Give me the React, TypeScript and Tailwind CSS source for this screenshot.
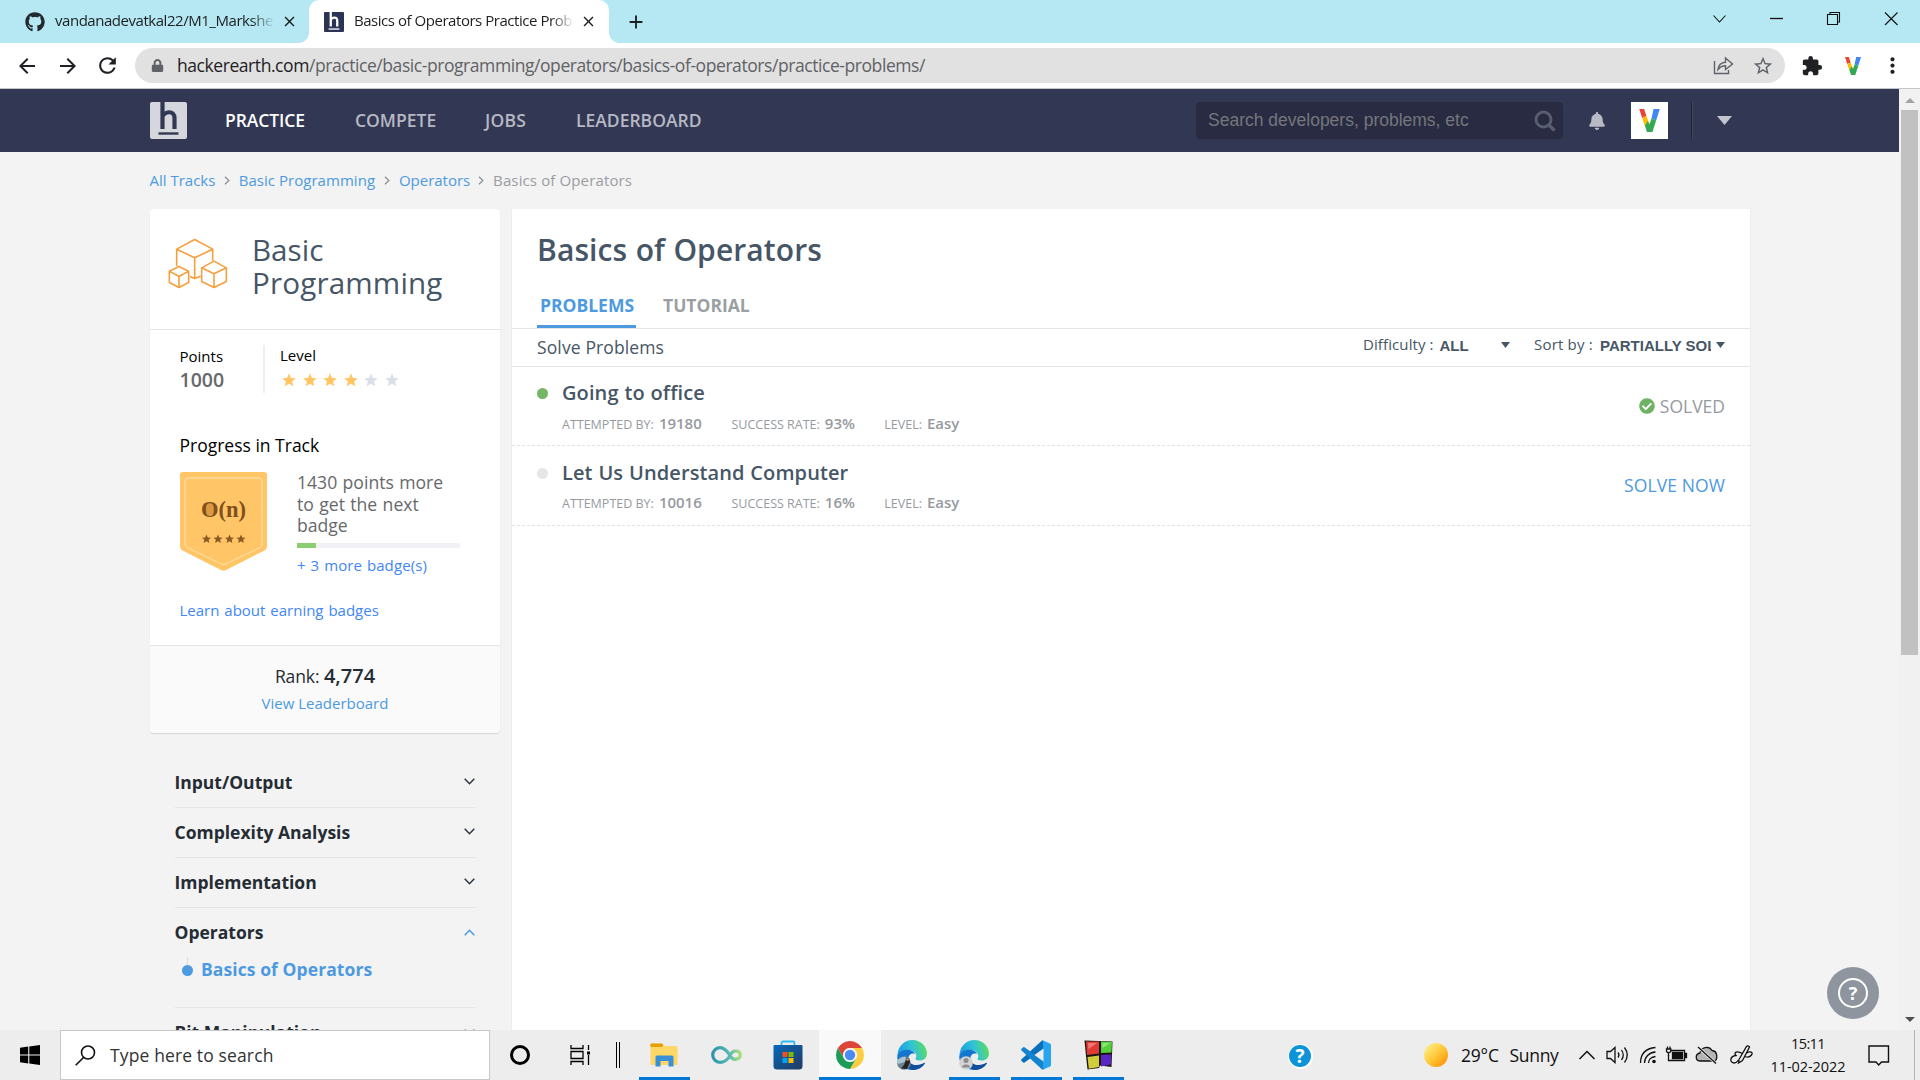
import React from "react";
import { FaGithub, FaBell, FaCheckCircle, FaLock } from "react-icons/fa";
import { MdArrowBack, MdArrowForward, MdRefresh, MdExtension, MdStarBorder, MdMoreVert, MdClose, MdAdd } from "react-icons/md";

/* ---------- small drawings ---------- */

function HLogo({ size, bg, fg }: { size: number; bg: string; fg: string }) {
  return (
    <svg width={size} height={size} viewBox="0 0 37 37" className="shrink-0">
      <rect width="37" height="37" rx="2" fill={bg} />
      <path d="M12.5 0V27M12.5 15C14 9.5 24.5 7.5 24.5 16V27" fill="none" stroke={fg} strokeWidth="4.2" />
      <path d="M8.5 31.5H28.5" stroke={fg} strokeWidth="2.4" />
    </svg>
  );
}

function VLogo({ w, h }: { w: number; h: number }) {
  return (
    <svg width={w} height={h} viewBox="0 0 16 18" className="shrink-0">
      <path d="M0 0H3.8L5.6 5.5L2.3 7Z" fill="#ea4335" />
      <path d="M2.3 7L5.6 5.5L8 12L4.6 14Z" fill="#fbbc05" />
      <path d="M11.2 0H16L13.2 9L9.6 7.2Z" fill="#4285f4" />
      <path d="M9.6 7.2L13.2 9L10.3 18H6L4.4 13L6.6 9.6L8 12Z" fill="#34a853" />
    </svg>
  );
}

function Cubes() {
  return (
    <svg width="60" height="51" viewBox="84 114 180 152" fill="none" stroke="#f79f3d" strokeWidth="4.800" strokeLinejoin="round">
      <path d="M110 198V147L164 118L218 147V182M110 147L164 173L218 147M164 173V233M150 229L164 235L182 228" />
      <path d="M117 199L146 213V247L117 262L88 247V213ZM88 213L117 229L146 213M117 229V262" />
      <path d="M222 183L259 203V244L222 262L185 244V203ZM185 203L222 221L259 203M222 221V262" />
    </svg>
  );
}

const STAR = "M0 -4.6L1.3 -1.5L4.6 -1.3L2.1 0.8L2.9 4.1L0 2.3L-2.9 4.1L-2.1 0.8L-4.6 -1.3L-1.3 -1.5Z";

function Badge() {
  return (
    <svg width="87" height="99" viewBox="0 0 87 99" className="shrink-0">
      <path d="M3 0H84Q87 0 87 3V74Q87 77 84.500 78.500L46 98Q43.500 99.500 41 98L2.500 78.500Q0 77 0 74V3Q0 0 3 0Z" fill="#ffc567" />
      <path d="M9 6H78Q82 6 82 10V72Q82 74.500 80 75.500L45.500 92Q43.500 93 41.500 92L7 75.500Q5 74.500 5 72V10Q5 6 9 6Z" fill="none" stroke="#ffdc9c" strokeWidth="1.300" />
      <ellipse cx="29.500" cy="37" rx="5" ry="6.500" fill="#dc9741" />
      <text x="21" y="44.500" fontFamily="Liberation Serif, serif" fontWeight="700" fontSize="22.500" fill="#7f4f1c" textLength="45" lengthAdjust="spacingAndGlyphs">O(n)</text>
      {[26.5, 38, 49.5, 61].map((x) => (
        <path key={x} d={STAR} transform={`translate(${x} 67)`} fill="#8a5a22" />
      ))}
    </svg>
  );
}

function Chevron({ up = false }: { up?: boolean }) {
  return (
    <svg width="11" height="7" viewBox="0 0 11 7" fill="none" stroke={up ? "#4d9ae0" : "#2c3540"} strokeWidth="1.5">
      <path d={up ? "M0.700 6.200L5.500 1.300L10.300 6.200" : "M0.700 0.800L5.500 5.700L10.300 0.800"} />
    </svg>
  );
}

function Caret({ w, h, color }: { w: number; h: number; color: string }) {
  return (
    <svg width={w} height={h} viewBox="0 0 10 6" preserveAspectRatio="none" className="shrink-0">
      <path d="M0 0H10L5 6Z" fill={color} />
    </svg>
  );
}

/* ---------- browser chrome ---------- */

function TabStrip() {
  return (
    <div className="flex h-[43px] shrink-0 bg-[#b5e8f3] text-[#1c1e20]">
      <div className="flex w-[309px] items-center pl-[25px]">
        <FaGithub size={20} color="#24292f" />
        <div className="mb-[2px] ml-[10px] w-[218px] overflow-hidden whitespace-nowrap bg-gradient-to-r from-[#1c1e20] from-90% to-[#1c1e2010] bg-clip-text text-[15px] tracking-[-0.46px] text-transparent">
          vandanadevatkal22/M1_Markshe
        </div>
        <MdClose size={17} className="ml-[8px]" />
      </div>
      <div className="relative flex w-[300px] items-center rounded-t-[10px] bg-white pl-[15px]">
        <div className="absolute bottom-0 left-[-10px] size-[10px] bg-[radial-gradient(circle_at_0_0,transparent_9.500px,white_10px)]" />
        <div className="absolute right-[-10px] bottom-0 size-[10px] bg-[radial-gradient(circle_at_100%_0,transparent_9.500px,white_10px)]" />
        <HLogo size={20} bg="#2b3454" fg="#ffffff" />
        <div className="mb-[2px] ml-[10px] w-[219px] overflow-hidden whitespace-nowrap bg-gradient-to-r from-[#1c1e20] from-90% to-[#1c1e2010] bg-clip-text text-[15px] tracking-[-0.46px] text-transparent">
          Basics of Operators Practice Prob
        </div>
        <MdClose size={17} className="ml-[7px]" />
      </div>
      <div className="flex w-[54px] items-center justify-center">
        <MdAdd size={22} />
      </div>
      <svg width="190" height="20" viewBox="0 0 190 20" className="mt-[9px] mr-[20px] ml-auto" fill="none" stroke="#111" strokeWidth="1.1">
        <path d="M3.500 6.500L9.500 13L15.500 6.500" />
        <path d="M60 9.500H73" strokeWidth="1.300" />
        <path d="M117.500 5.500H127.500V15.500H117.500ZM120 5.500V3.500H129.500V13H127.500" />
        <path d="M175 3.500L187.500 16M187.500 3.500L175 16" />
      </svg>
    </div>
  );
}

function AddressBar() {
  return (
    <div className="flex h-[46px] shrink-0 items-center border-b border-[#c4c6c8] bg-white text-[#202124]">
      <div className="flex w-[135px] items-center">
        <MdArrowBack size={24} className="ml-[15px]" />
        <MdArrowForward size={24} className="ml-[17px]" />
        <MdRefresh size={25} className="ml-[15px]" />
      </div>
      <div className="flex h-[35px] w-[1650px] items-center rounded-full bg-[#e1e1e1] pl-[16px]">
        <FaLock size={13} color="#5f6368" />
        <div className="ml-[13px] text-[17.5px] tracking-[-0.43px] whitespace-nowrap text-[#606265]">
          <span className="text-[#1f2123]">hackerearth.com</span>/practice/basic-programming/operators/basics-of-operators/practice-problems/
        </div>
        <svg width="21" height="19" viewBox="0 0 21 19" className="ml-auto" fill="none" stroke="#5f6368" strokeWidth="1.4">
          <path d="M1.500 5V17.500H15.500V14" />
          <path d="M5 13.500C5.500 9 8 6.500 12.500 6.200V2L19.500 8L12.500 13.500V9.800C9 9.800 7 11 5 13.500Z" />
        </svg>
        <MdStarBorder size={22} color="#5f6368" className="mr-[11px] ml-[18px]" />
      </div>
      <MdExtension size={22} className="ml-[16px]" />
      <div className="ml-[22px]"><VLogo w={16} h={18} /></div>
      <MdMoreVert size={25} className="ml-[19px]" />
    </div>
  );
}

/* ---------- site header ---------- */

function SiteNav() {
  return (
    <div className="flex h-[63px] shrink-0 items-center bg-[#323754] text-[17.5px] font-semibold text-[#b6b8c3]">
      <div className="ml-[150px]"><HLogo size={37} bg="#d5d7dd" fg="#323754" /></div>
      <div className="ml-[38px] w-[130px] tracking-[-0.1px] text-white">PRACTICE</div>
      <div className="w-[130px]">COMPETE</div>
      <div className="w-[91px] tracking-[0.2px]">JOBS</div>
      <div>LEADERBOARD</div>
      <div className="ml-auto flex h-[37px] w-[367px] items-center rounded-[4px] bg-[#282b42] pl-[12px] font-['Liberation_Sans',sans-serif] text-[17.5px] font-normal text-[#75767c]">
        Search developers, problems, etc
        <svg width="22" height="22" viewBox="0 0 22 22" className="mr-[7px] ml-auto" fill="none" stroke="#595d70" strokeWidth="3">
          <circle cx="9.500" cy="9.500" r="7.500" />
          <path d="M15 15L20.500 20.500" strokeWidth="3.500" />
        </svg>
      </div>
      <FaBell size={18} color="#b8bac5" className="ml-[25px]" />
      <div className="ml-[25px] flex size-[37px] items-center justify-center bg-white"><VLogo w={21} h={23} /></div>
      <div className="ml-[23px] h-[37px] w-[2px] border-l border-[#20222f] bg-[#44485f]" />
      <div className="mr-[167px] ml-[24px]"><Caret w={15} h={9} color="#c3c5cf" /></div>
    </div>
  );
}

function Breadcrumb() {
  const items = [
    { t: "All Tracks", w: "w-[66px]" },
    { t: "Basic Programming", w: "w-[137px] tracking-[0.04px]" },
    { t: "Operators", w: "w-[71px]" },
  ];
  return (
    <div className="flex h-[57px] items-center pl-[149.500px] text-[15px] whitespace-nowrap text-[#4d9ae0]">
      {items.map((i) => (
        <React.Fragment key={i.t}>
          <span className={i.w}>{i.t}</span>
          <svg width="6" height="9" viewBox="0 0 6 9" className="mx-[8.600px]" fill="none" stroke="#8d9196" strokeWidth="1.3">
            <path d="M1 0.700L4.800 4.500L1 8.300" />
          </svg>
        </React.Fragment>
      ))}
      <span className="tracking-[0.13px] text-[#9a9da1]">Basics of Operators</span>
    </div>
  );
}

/* ---------- left column ---------- */

function TrackCard() {
  return (
    <div className="flex h-[524px] w-[350px] flex-col overflow-hidden rounded-[4px] bg-white shadow-[0_1px_1px_rgba(0,0,0,0.12)]">
      <div className="flex h-[121px] shrink-0 border-b border-[#e5e5e5] pt-[24px] pl-[18px]">
        <div className="mt-[5px]"><Cubes /></div>
        <div className="ml-[24px] text-[29.600px] leading-[33px] text-[#465666]">
          <div>Basic</div>
          <div className="tracking-[0.16px]">Programming</div>
        </div>
      </div>
      <div className="flex h-[79px] shrink-0 pt-[15px] pl-[29.500px]">
        <div className="w-[83.500px]">
          <div className="h-[22px] text-[15px] leading-[22px] text-black">Points</div>
          <div className="h-[26px] text-[19.500px] leading-[26px] font-semibold text-[#66696c]">1000</div>
        </div>
        <div className="h-[48px] w-[2px] bg-[#eeeeee]" />
        <div className="ml-[15px]">
          <div className="h-[20px] text-[15px] leading-[20px] text-black">Level</div>
          <div className="mt-[8px] ml-[2px] flex gap-[6.500px]">
            {[1, 1, 1, 1, 0, 0].map((on, i) => (
              <svg key={i} width="14" height="14" viewBox="-4.700 -4.700 9.400 9.100">
                <path d={STAR} fill={on ? "#ffc567" : "#dbe0e8"} />
              </svg>
            ))}
          </div>
        </div>
      </div>
      <div className="mt-[24px] h-[24px] pl-[29.500px] text-[17.5px] leading-[24px] text-black">Progress in Track</div>
      <div className="mt-[15px] flex h-[114px] pl-[30px]">
        <Badge />
        <div className="ml-[30px] w-[170px] whitespace-nowrap">
          <div className="text-[17.600px] leading-[21.500px] text-[#66696c]">
            <div className="[word-spacing:0.8px]">1430 points more</div>
            <div className="[word-spacing:0.8px]">to get the next</div>
            <div>badge</div>
          </div>
          <div className="mt-[6.500px] h-[5px] w-[163px] rounded-r-full bg-[#f0f0f5]">
            <div className="h-full w-[19px] bg-[#8bcd70]" />
          </div>
          <div className="mt-[6px] text-[15px] leading-[22px] tracking-[0.1px] [word-spacing:0.9px] text-[#3f87f5]">+ 3 more badge(s)</div>
        </div>
      </div>
      <div className="mt-[13px] h-[22px] pl-[29.500px] text-[15px] leading-[22px] [word-spacing:1px] text-[#3f87f5]">Learn about earning badges</div>
      <div className="mt-auto h-[88px] shrink-0 border-t border-[#e5e5e5] bg-[#fafafa] pt-[17px] text-center">
        <div className="h-[26px] text-[17.5px] leading-[26px] tracking-[-0.1px] text-[#252c33]">
          Rank: <span className="text-[20px] font-semibold tracking-normal">4,774</span>
        </div>
        <div className="mt-[3px] text-[15px] leading-[22px] text-[#4d9ae0]">View Leaderboard</div>
      </div>
    </div>
  );
}

function TopicList() {
  return (
    <div className="mt-[25px] ml-[25px] w-[300px] text-[17.5px] font-bold text-[#252c33]">
      {["Input/Output", "Complexity Analysis", "Implementation"].map((t) => (
        <div key={t} className="flex h-[50px] items-center justify-between border-b border-[#e5e5e5]">
          <span className="-ml-[0.500px]">{t}</span>
          <div className="mb-[2px]"><Chevron /></div>
        </div>
      ))}
      <div className="h-[100px] border-b border-[#e5e5e5]">
        <div className="flex h-[49px] items-center justify-between">
          <span className="-ml-[0.500px]">Operators</span>
          <Chevron up />
        </div>
        <div className="flex h-[24px] items-center pl-[7px] text-[#4d9ae0]">
          <div className="flex h-[24px] w-[11px] flex-col items-center">
            <div className="h-[8px] w-px bg-[#dddddd]" />
            <div className="size-[11px] shrink-0 rounded-full bg-[#4d9ae0]" />
          </div>
          <span className="ml-[8px] tracking-[0.08px]">Basics of Operators</span>
        </div>
      </div>
      <div className="flex h-[48px] items-center justify-between">
        <span className="-ml-[0.500px]">Bit Manipulation</span>
        <Chevron />
      </div>
    </div>
  );
}

/* ---------- problem list ---------- */

function Meta({ label, value, box }: { label: string; value: string; box: string }) {
  return (
    <div className={`${box} flex shrink-0 items-baseline whitespace-nowrap text-[#969a9f]`}>
      <span className="text-[12.500px]">{label}</span>
      <span className="ml-[5px] text-[15px] font-semibold">{value}</span>
    </div>
  );
}

function Problem({ title, by, rate, solved }: { title: string; by: string; rate: string; solved: boolean }) {
  return (
    <div className={`flex border-b border-dashed border-[#e0e2e4] pl-[25px] ${solved ? "h-[79px]" : "h-[80px]"}`}>
      <div className={`size-[11px] shrink-0 rounded-full ${solved ? "mt-[21px] bg-[#74b566]" : "mt-[22px] bg-[#e5e6e8]"}`} />
      <div className={`ml-[14px] ${solved ? "pt-[12px]" : "pt-[13px]"}`}>
        <div className="h-[28px] text-[20px] leading-[28px] font-semibold tracking-[0.1px] [word-spacing:0.5px] text-[#465666]">{title}</div>
        <div className={`flex h-[22px] leading-[22px] ${solved ? "mt-[5px]" : "mt-[4px]"}`}>
          <Meta label="ATTEMPTED BY:" value={by} box="w-[169.500px]" />
          <Meta label="SUCCESS RATE:" value={rate} box="w-[152.800px]" />
          <Meta label="LEVEL:" value="Easy" box="w-[80px]" />
        </div>
      </div>
      <div className="mr-[25px] ml-auto flex items-center text-[17.5px]">
        {solved ? (
          <>
            <FaCheckCircle size={16} color="#6fb263" />
            <span className="ml-[5px] text-[#969a9f]">SOLVED</span>
          </>
        ) : (
          <span className="tracking-[0.1px] text-[#4d9ae0]">SOLVE NOW</span>
        )}
      </div>
    </div>
  );
}

function ProblemsPanel() {
  return (
    <div className="ml-[12px] flex w-[1238px] flex-col bg-white shadow-[0_0_1px_rgba(0,0,0,0.15)]">
      <div className="flex h-[120px] shrink-0 flex-col border-b border-[#e5e5e5] pl-[25px]">
        <div className="mt-[20px] h-[42px] text-[30px] leading-[42px] font-semibold tracking-[0.1px] [word-spacing:0.5px] text-[#465666]">Basics of Operators</div>
        <div className="mt-auto flex h-[46px] text-[17.5px] leading-[46px] font-bold">
          <div className="h-[46px] w-[99px] border-b-[3px] border-[#4d9ae0] pl-[3px] text-[#4d9ae0]">PROBLEMS</div>
          <div className="ml-[27px] text-[#9a9fa4]">TUTORIAL</div>
        </div>
      </div>
      <div className="flex h-[38px] shrink-0 items-center border-b border-[#e5e5e5] pr-[25px] pl-[25px] text-[#465666]">
        <div className="text-[17.5px] tracking-[0.12px]">Solve Problems</div>
        <div className="mb-[6px] ml-auto flex items-center text-[15px] whitespace-nowrap">
          <div className="w-[76.500px] tracking-[0.1px]">Difficulty :</div>
          <div className="w-[61px] pt-[3px] font-['Liberation_Sans',sans-serif] font-bold">ALL</div>
          <Caret w={9} h={6} color="#465666" />
          <div className="ml-[24.500px] w-[66px] tracking-[0.2px]">Sort by :</div>
          <div className="mr-[5px] w-[111px] overflow-hidden pt-[3px] font-['Liberation_Sans',sans-serif] font-bold">PARTIALLY SOLVED</div>
          <Caret w={9} h={6} color="#465666" />
        </div>
      </div>
      <Problem title="Going to office" by="19180" rate="93%" solved />
      <Problem title="Let Us Understand Computer" by="10016" rate="16%" solved={false} />
    </div>
  );
}

/* ---------- taskbar ---------- */

function EdgeIcon({ id, photo }: { id: string; photo: boolean }) {
  return (
    <svg width="30" height="30" viewBox="0 0 30 30">
      <defs>
        <linearGradient id={id} x1="0" y1="0.500" x2="1" y2="0.300">
          <stop offset="0" stopColor="#1b9de2" />
          <stop offset="0.500" stopColor="#2fc3d6" />
          <stop offset="1" stopColor="#5fdc5c" />
        </linearGradient>
      </defs>
      <path d="M0.500 15C1 6 7.500 0 15.500 0C24 0 30 6.500 30 13.500C30 18 26.500 20.500 23 20.500C19.500 20.500 18 19.500 18.500 18.500C20.500 16 19 11 13 10C7 9.500 1.500 12.500 0.500 15Z" fill={`url(#${id})`} />
      <path d="M0.300 16C1 12 6 9.300 11.500 9.800C15 10.200 17.500 12 18 14C14 12.500 11 15.500 11.500 19.500C12.500 25 19 27 25 24.500L28 23C25.500 27.500 20.500 30 15.500 30C6.500 30 -0.300 24 0.300 16Z" fill="#1477cf" />
      <path d="M11.500 19C11.500 24.500 19 26.500 24.500 24C26.500 23 28.500 21.800 27.800 23.500C25.500 27.500 20.500 30 15.500 30C11 29 9 23 11.500 19Z" fill="#12509b" />
      <circle cx="7" cy="23" r="6.800" fill={photo ? "#6b8290" : "#d2d2d2"} />
      {photo ? (
        <>
          <path d="M0.500 20C3 17.500 7 16 9 17L8 22L1 24Z" fill="#a9c6d6" />
          <path d="M9.500 18L12 18.500L13 22L10 29L4 28.500L7 25Z" fill="#2b2323" />
          <circle cx="10.500" cy="19.500" r="1.300" fill="#c99a86" />
        </>
      ) : (
        <>
          <circle cx="7" cy="20.500" r="2.500" fill="#8c8c8c" />
          <path d="M3 27.500C3 23.500 11 23.500 11 27.500Z" fill="#8c8c8c" />
        </>
      )}
    </svg>
  );
}

const ICONS: { icon: React.ReactNode; open: boolean; active?: boolean }[] = [
  {
    open: true,
    icon: (
      <svg width="28" height="24" viewBox="0 0 28 24">
        <path d="M0.500 1.500Q0.500 0.500 1.500 0.500H12L14 3H26Q27.500 3 27.500 4.500V21Q27.500 22 26.500 22H1.500Q0.500 22 0.500 21Z" fill="#ffd766" />
        <path d="M0.500 1.500Q0.500 0.500 1.500 0.500H12L13.500 2L12 4H0.500Z" fill="#e3a008" />
        <path d="M5.500 23.500V14Q5.500 12.500 7 12.500H22Q23.500 12.500 23.500 14V23.500H18.500V18H10.500V23.500Z" fill="#3a8fd6" />
      </svg>
    ),
  },
  {
    open: false,
    icon: (
      <svg width="31" height="18" viewBox="0 0 31 18">
        <defs>
          <linearGradient id="inf" x1="0" x2="1">
            <stop offset="0" stopColor="#2f93ab" />
            <stop offset="0.600" stopColor="#57b9b4" />
            <stop offset="1" stopColor="#a8df79" />
          </linearGradient>
        </defs>
        <path d="M18.500 10.500C15 16 12 16.300 9 16.300A7.300 7.300 0 0 1 9 1.700C15 1.700 17.500 7.500 20 11C22 14.500 29.300 14 29.300 9C29.300 4 22 3.500 19.500 8.500L17.500 12" fill="none" stroke="url(#inf)" strokeWidth="3.200" />
      </svg>
    ),
  },
  {
    open: false,
    icon: (
      <svg width="30" height="30" viewBox="0 0 30 30">
        <defs>
          <linearGradient id="store" x1="0" y1="0" x2="1" y2="1">
            <stop offset="0" stopColor="#0669bd" />
            <stop offset="1" stopColor="#243a5e" />
          </linearGradient>
        </defs>
        <path d="M8.500 7V3Q8.500 1.500 10 1.500H20Q21.500 1.500 21.500 3V7" fill="none" stroke="#2fb9f0" strokeWidth="1.800" />
        <path d="M0.500 6Q0.500 5 1.500 5H28.500Q29.500 5 29.500 6V26Q29.500 29.500 26 29.500H4Q0.500 29.500 0.500 26Z" fill="url(#store)" />
        <rect x="9.500" y="12" width="5" height="5" fill="#f25022" />
        <rect x="15.500" y="12" width="5" height="5" fill="#7fba00" />
        <rect x="9.500" y="18" width="5" height="5" fill="#00a4ef" />
        <rect x="15.500" y="18" width="5" height="5" fill="#ffb900" />
      </svg>
    ),
  },
  {
    open: true,
    active: true,
    icon: (
      <svg width="28" height="28" viewBox="0 0 28 28">
        <path d="M1.900 7A14 14 0 0 1 26.100 7H14A7 7 0 0 0 7.900 17.500Z" fill="#dc4638" />
        <path d="M26.100 7A14 14 0 0 1 14 28L20.100 17.500A7 7 0 0 0 14 7Z" fill="#fdcd42" />
        <path d="M14 28A14 14 0 0 1 1.900 7L7.900 17.500A7 7 0 0 0 20.100 17.500Z" fill="#1c9c57" />
        <circle cx="14" cy="14" r="6.500" fill="#f5f5f5" />
        <circle cx="14" cy="14" r="5.200" fill="#4a8af4" />
      </svg>
    ),
  },
  { open: false, icon: <EdgeIcon id="edgeA" photo /> },
  { open: true, icon: <EdgeIcon id="edgeB" photo={false} /> },
  {
    open: true,
    icon: (
      <svg width="30" height="30" viewBox="0 0 30 30">
        <path d="M22 0.300L24 8L3.500 22.500Q2.800 23 2.200 22.500L0.500 21Q-0.200 20 0.500 19.300L20.500 1Q21.300 0.200 22 0.300Z" fill="#0a6fbd" />
        <path d="M22 29.800L24 22L3.500 7.300Q2.800 6.800 2.200 7.300L0.500 8.800Q-0.200 9.700 0.500 10.500L20.500 29Q21.300 29.900 22 29.800Z" fill="#1484cf" />
        <path d="M22 0.500L29 3.500Q30 4 30 5V25Q30 26 29 26.500L22 29.700Z" fill="#27a5ee" />
        <path d="M22.500 8.500V21.500L13.500 15Z" fill="#ededed" />
      </svg>
    ),
  },
  {
    open: true,
    icon: (
      <svg width="29" height="30" viewBox="0 0 29 30">
        <path d="M0.500 0.500L28.500 1.500L27.500 27L16 25.500L15 28L3.500 29.500L2 16Z" fill="#1a1414" />
        <path d="M2 1.500H15V13.500L3 15Z" fill="#e23b35" />
        <path d="M17 1.500L28 2L27.500 12.500L17 13Z" fill="#55cf3a" />
        <path d="M3.500 17L15 15.500V27L4.800 28.800Z" fill="#d2cb3a" />
        <path d="M17 15L27.300 14.500L26.800 24.500L17 26.500Z" fill="#5b25c4" />
        <path d="M4 3H13L4.500 9Z" fill="#f07a72" />
        <path d="M18.500 3H26L18.500 8Z" fill="#8be874" />
      </svg>
    ),
  },
];

function Taskbar() {
  return (
    <div className="flex h-[50px] shrink-0 bg-[#ededed] text-[17.5px] text-[#111]">
      <div className="flex w-[60px] items-center justify-center">
        <svg width="20" height="20" viewBox="0 0 20 20">
          <path d="M0 2.800L8.200 1.600V9.500H0ZM9.300 1.500L20 0V9.500H9.300ZM0 10.600H8.200V18.500L0 17.300ZM9.300 10.600H20V20L9.300 18.600Z" fill="#000" />
        </svg>
      </div>
      <div className="flex w-[430px] items-center border border-[#c8c8c8] bg-white pl-[14px] text-[#333]">
        <svg width="21" height="21" viewBox="0 0 21 21" fill="none" stroke="#111" strokeWidth="1.6">
          <circle cx="13" cy="7.500" r="6.500" />
          <path d="M8.500 12.500L0.700 20.300" />
        </svg>
        <span className="ml-[14px] tracking-[0.13px]">Type here to search</span>
      </div>
      <div className="flex w-[60px] items-center justify-center">
        <div className="size-[20px] rounded-full border-[3px] border-black" />
      </div>
      <div className="flex w-[60px] items-center justify-center">
        <svg width="21" height="20" viewBox="0 0 21 20" fill="none" stroke="#000" strokeWidth="1.3">
          <path d="M1 0V3.500H13V0M1 6.500H13V13.500H1ZM1 20V16.500H13V20M18.500 0V5M18.500 10V20" />
          <path d="M17 6.500H20V9.500H17Z" fill="#000" stroke="none" />
        </svg>
      </div>
      <div className="flex w-[23px] items-center justify-end gap-[2px] pr-[13px]">
        <div className="h-[26px] w-px shrink-0 bg-black" />
        <div className="h-[26px] w-px shrink-0 bg-black" />
      </div>
      {ICONS.map((it, i) => (
        <div key={i} className={`flex w-[62px] flex-col items-center ${it.active ? "bg-[#f9f9f9]" : ""}`}>
          <div className="flex h-[47px] items-center pt-[3px]">{it.icon}</div>
          {it.open && <div className={`h-[3px] bg-[#0078d7] ${it.active ? "w-full" : "w-[51px]"}`} />}
        </div>
      ))}
      <div className="ml-[158.500px] flex w-[26px] items-center">
        <div className="mt-[2px] flex size-[25px] items-center justify-center rounded-full bg-white">
          <div className="flex size-[22px] items-center justify-center rounded-full bg-[#0d94d8] text-[19px] leading-none font-bold text-white">?</div>
        </div>
      </div>
      <div className="ml-[110.500px] flex items-center">
        <div className="size-[24px] rounded-full bg-[linear-gradient(135deg,#ffe97a_15%,#ffc83a_50%,#ff8c00_95%)]" />
        <span className="mt-[1px] ml-[13px] w-[48.500px] tracking-[-0.2px]">29°C</span>
        <span className="mt-[1px] tracking-[-0.3px]">Sunny</span>
      </div>
      <svg width="176" height="22" viewBox="0 0 176 22" className="mt-[14px] ml-auto shrink-0" fill="none" stroke="#111" strokeWidth="1.3">
        <path d="M1.500 15L9 7.500L16.500 15" strokeWidth="1.500" />
        <path d="M29 7.500H32.500L37 3.500V18.500L32.500 14.500H29ZM40 8.500Q42 11 40 13.500M43.500 6Q47 11 43.500 16M46.500 3.500Q52 11 46.500 18.500" />
        <path d="M62.500 19C62.500 10 68 4.500 77.500 3.500M66.500 19C66.500 13 71 8.500 77.500 8M70.500 19C70.500 16 73 13 77.500 12.500" />
        <circle cx="76" cy="17.500" r="1.800" fill="#111" stroke="none" />
        <path d="M92.500 6.500H106.500V16.500H90.500V11" />
        <path d="M94.500 8.500H104.500V14.500H94.500ZM107.500 9.500H108.500V13.500H107.500Z" fill="#111" />
        <path d="M88.500 5V7.500Q90.500 10 92.800 7.500V5ZM89.500 2.500V5M92 2.500V5M90.500 9V12" />
        <path d="M122 17C117 16.500 117 10 122 9C123 3 131 1.500 134 6.500C140 7 140 16 136 17Z" fill="#b4b4b4" />
        <path d="M120 3L138 19.500" stroke="#ededed" strokeWidth="3" />
        <path d="M120 3L138 19.500" />
        <path d="M161 15.500L168.500 2.500Q170 1 171.500 3L164.500 16.500L160.500 19Z" />
        <path d="M164.500 9.500C159 6.500 155 8 158 11.500C152 12 151 18.500 156 19C158.500 19 159.500 17.500 160.500 16M168.500 9C172.500 6.500 175.500 8.500 173.500 11C172 13 169.500 13.500 167 12.500" />
      </svg>
      <div className="ml-[4px] flex w-[100px] flex-col items-center pt-[2px] text-[14.500px] leading-[23px] tracking-[-0.06px]">
        <span className="tracking-[-0.6px]">15:11</span>
        <span>11-02-2022</span>
      </div>
      <svg width="22" height="22" viewBox="0 0 22 22" className="mt-[15px] ml-[10px] shrink-0" fill="none" stroke="#111" strokeWidth="1.4">
        <path d="M1 1H20.500V17H13.500L10.700 20L8 17H1Z" />
      </svg>
      <div className="mr-[5px] ml-[24px] w-px shrink-0 bg-[#b5b5b5]" />
    </div>
  );
}

export default function App() {
  return (
    <div className="flex h-[1080px] w-[1920px] flex-col overflow-hidden bg-[#f3f3f3] font-['Open_Sans','Noto_Sans',sans-serif]">
      <TabStrip />
      <AddressBar />
      <div className="flex h-[941px] shrink-0 overflow-hidden">
        <div className="relative flex w-[1899px] flex-col">
          <SiteNav />
          <Breadcrumb />
          <div className="flex h-[821px] shrink-0 overflow-hidden pl-[150px]">
            <div className="w-[350px] shrink-0">
              <TrackCard />
              <TopicList />
            </div>
            <ProblemsPanel />
          </div>
          <div className="absolute top-[878px] left-[1827px] flex size-[52px] items-center justify-center rounded-full bg-[#8f959e]">
            <div className="flex size-[30px] items-center justify-center rounded-full border-2 border-white text-[18px] leading-none font-bold text-white">?</div>
          </div>
        </div>
        <div className="flex w-[21px] flex-col items-center bg-[#f1f1f1]">
          <div className="mt-[9px] rotate-180"><Caret w={10} h={5} color="#a3a3a3" /></div>
          <div className="mt-[7px] h-[545px] w-[17px] bg-[#c1c1c1]" />
          <div className="mt-auto mb-[8px]"><Caret w={10} h={5} color="#505050" /></div>
        </div>
      </div>
      <Taskbar />
    </div>
  );
}
